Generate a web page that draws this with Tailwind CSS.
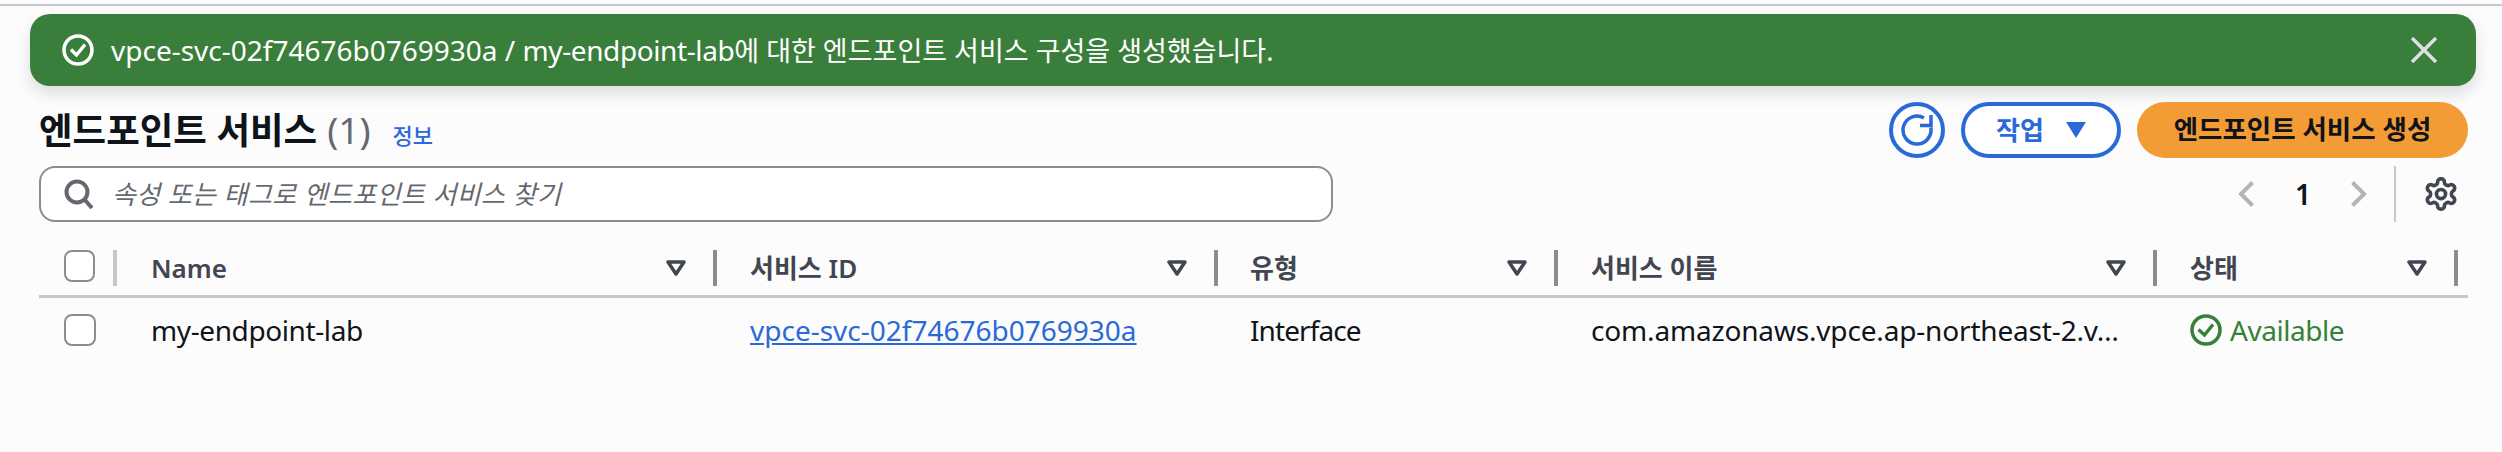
<!DOCTYPE html>
<html lang="ko">
<head>
  <meta charset="UTF-8" />
  <title>엔드포인트 서비스</title>
  <script src="https://cdn.jsdelivr.net/npm/@tailwindcss/browser@4"></script>
</head>
<body class="bg-[#fcfcfd] text-[#0f141a] font-['Noto_Sans','Noto_Sans_CJK_KR',sans-serif] text-[28px] overflow-hidden">
  <div class="w-[2502px] h-[452px] pt-[4px]">
    <div class="h-[2px] bg-[#c6c6cd]"></div>

    <!-- Success banner -->
    <div class="mt-[8px] ml-[30px] w-[2446px] h-[72px] rounded-[20px] bg-[#3a7e3b] text-white flex items-center pl-[32px] pr-[39px] shadow-[0_8px_16px_rgba(0,7,22,0.12)]">
      <svg class="w-[32px] h-[32px] shrink-0" viewBox="0 0 32 32" fill="none" stroke="white" stroke-width="3.5"><circle cx="16" cy="16" r="14"/><path d="M9 15.5l5.5 5.5 8.5-10.5"/></svg>
      <span class="ml-[17px]">vpce-svc-02f74676b0769930a / <span class="tracking-[-0.4px]">my-endpoint-lab</span><span class="text-[27px]">에 대한 엔드포인트 서비스 구성을 생성했습니다.</span></span>
      <svg class="ml-auto w-[26px] h-[26px] shrink-0" viewBox="0 0 26 26" fill="none" stroke="#dedee3" stroke-width="3.5"><path d="M1 1l24 24M25 1L1 25"/></svg>
    </div>

    <!-- Heading + actions -->
    <div class="ml-[39px] w-[2429px] flex justify-between mt-[16px] h-[56px]">
      <div class="flex items-baseline">
        <h1 class="text-[36.5px] font-bold leading-[56px]">엔드포인트 서비스</h1>
        <span class="text-[37px] text-[#656871] ml-[10px]">(1)</span>
        <a class="text-[22px] font-medium text-[#2a6ad8] ml-[22px]">정보</a>
      </div>
      <div class="flex gap-[16px]">
        <button class="w-[56px] h-[56px] rounded-full border-[4px] border-[#2a6ad8] bg-white flex items-center justify-center">
          <svg class="w-[34px] h-[34px]" viewBox="0 0 34 34" fill="none" stroke="#2a6ad8" stroke-width="3.5"><path d="M24 4.9A14 14 0 1 0 30.8 14.5"/><path d="M31 2v10.5H20"/></svg>
        </button>
        <button class="w-[160px] h-[56px] rounded-full border-[4px] border-[#2a6ad8] bg-white text-[#2a6ad8] font-bold text-[26px] flex items-center justify-center gap-[22px]">
          작업
          <svg class="w-[20px] h-[16px]" viewBox="0 0 20 16" fill="#2a6ad8"><path d="M0 0h20L10 16z"/></svg>
        </button>
        <button class="w-[331px] h-[56px] rounded-full bg-[#f39c36] font-bold text-[26.5px] flex items-center justify-center">엔드포인트 서비스 생성</button>
      </div>
    </div>

    <!-- Search + pagination -->
    <div class="ml-[39px] w-[2429px] flex mt-[8px] h-[56px]">
      <div class="w-[1294px] h-[56px] rounded-[16px] border-[2px] border-[#8c8c94] bg-white flex items-center pl-[23px]">
        <svg class="w-[30px] h-[30px] shrink-0" viewBox="0 0 30 30" fill="none" stroke="#656871" stroke-width="4"><circle cx="13" cy="13" r="10.5"/><path d="M20.5 20.5L28 29"/></svg>
        <span class="ml-[18px] italic text-[26px] tracking-[0.4px] text-[#656871]">속성 또는 태그로 엔드포인트 서비스 찾기</span>
      </div>
      <div class="ml-auto flex items-center">
        <svg class="w-[16px] h-[26px]" viewBox="0 0 16 26" fill="none" stroke="#b4b4bb" stroke-width="4"><path d="M14.5 1.5L3 13l11.5 11.5"/></svg>
        <span class="w-[55px] ml-[41px] font-semibold">1</span>
        <svg class="w-[16px] h-[26px] ml-[1px]" viewBox="0 0 16 26" fill="none" stroke="#b4b4bb" stroke-width="4"><path d="M1.5 1.5L13 13 1.5 24.5"/></svg>
        <div class="w-[2px] h-[56px] bg-[#c6c6cd] ml-[27px]"></div>
        <svg class="w-[34px] h-[34px] ml-[28px] mr-[10px]" viewBox="0.8 0.8 22.4 22.4" fill="none" stroke="#424650" stroke-width="2.4"><circle cx="12" cy="12" r="3"/><path d="M12.22 2h-.44a2 2 0 0 0-2 2v.18a2 2 0 0 1-1 1.73l-.43.25a2 2 0 0 1-2 0l-.15-.08a2 2 0 0 0-2.73.73l-.22.38a2 2 0 0 0 .73 2.73l.15.1a2 2 0 0 1 1 1.72v.51a2 2 0 0 1-1 1.74l-.15.09a2 2 0 0 0-.73 2.73l.22.38a2 2 0 0 0 2.73.73l.15-.08a2 2 0 0 1 2 0l.43.25a2 2 0 0 1 1 1.73V20a2 2 0 0 0 2 2h.44a2 2 0 0 0 2-2v-.18a2 2 0 0 1 1-1.73l.43-.25a2 2 0 0 1 2 0l.15.08a2 2 0 0 0 2.73-.73l.22-.39a2 2 0 0 0-.73-2.73l-.15-.08a2 2 0 0 1-1-1.74v-.5a2 2 0 0 1 1-1.74l.15-.09a2 2 0 0 0 .73-2.73l-.22-.38a2 2 0 0 0-2.73-.73l-.15.08a2 2 0 0 1-2 0l-.43-.25a2 2 0 0 1-1-1.73V4a2 2 0 0 0-2-2z"/></svg>
      </div>
    </div>

    <!-- Table header -->
    <div class="ml-[39px] w-[2429px] mt-[28px] h-[48px] border-b-[3px] border-[#c6c6cd] flex text-[#424650] font-semibold text-[26px]">
      <div class="w-[78px] h-[36px] flex items-start">
        <span class="ml-[25px] w-[32px] h-[32px] rounded-[8px] border-[2px] border-[#8c8c94] bg-white"></span>
        <span class="ml-[18px] w-[4px] h-[36px] bg-[#c6c6cd]"></span>
      </div>
      <div class="w-[600px] h-[36px] flex items-center pl-[34px] border-r-[4px] border-[#8c8c94]">
        <span class="leading-[36px]">Name</span>
        <svg class="ml-auto mr-[27px] w-[20px] h-[16px]" viewBox="0 0 20 16" fill="none" stroke="#424650" stroke-width="3.5" stroke-linejoin="round"><path d="M2 2h16l-8 12z"/></svg>
      </div>
      <div class="w-[501px] h-[36px] flex items-center pl-[33px] border-r-[4px] border-[#8c8c94]">
        <span class="leading-[36px]">서비스 ID</span>
        <svg class="ml-auto mr-[27px] w-[20px] h-[16px]" viewBox="0 0 20 16" fill="none" stroke="#424650" stroke-width="3.5" stroke-linejoin="round"><path d="M2 2h16l-8 12z"/></svg>
      </div>
      <div class="w-[340px] h-[36px] flex items-center pl-[32px] border-r-[4px] border-[#8c8c94]">
        <span class="leading-[36px]">유형</span>
        <svg class="ml-auto mr-[27px] w-[20px] h-[16px]" viewBox="0 0 20 16" fill="none" stroke="#424650" stroke-width="3.5" stroke-linejoin="round"><path d="M2 2h16l-8 12z"/></svg>
      </div>
      <div class="w-[599px] h-[36px] flex items-center pl-[33px] border-r-[4px] border-[#8c8c94]">
        <span class="leading-[36px]">서비스 이름</span>
        <svg class="ml-auto mr-[27px] w-[20px] h-[16px]" viewBox="0 0 20 16" fill="none" stroke="#424650" stroke-width="3.5" stroke-linejoin="round"><path d="M2 2h16l-8 12z"/></svg>
      </div>
      <div class="w-[301px] h-[36px] flex items-center pl-[33px] border-r-[4px] border-[#8c8c94]">
        <span class="leading-[36px]">상태</span>
        <svg class="ml-auto mr-[27px] w-[20px] h-[16px]" viewBox="0 0 20 16" fill="none" stroke="#424650" stroke-width="3.5" stroke-linejoin="round"><path d="M2 2h16l-8 12z"/></svg>
      </div>
    </div>

    <!-- Table row -->
    <div class="ml-[39px] w-[2429px] mt-[14px] h-[36px] flex items-center whitespace-nowrap">
      <div class="w-[78px]">
        <span class="block ml-[25px] w-[32px] h-[32px] rounded-[8px] border-[2px] border-[#8c8c94] bg-white"></span>
      </div>
      <div class="w-[600px] pl-[34px] tracking-[-0.4px]">my-endpoint-lab</div>
      <div class="w-[501px] pl-[33px]"><a class="text-[#2a6ad8] underline">vpce-svc-02f74676b0769930a</a></div>
      <div class="w-[340px] pl-[32px] tracking-[-0.9px]">Interface</div>
      <div class="w-[599px] pl-[33px] tracking-[-0.17px]">com.amazonaws.vpce.ap-northeast-2.v…</div>
      <div class="w-[301px] pl-[33px] flex items-center text-[#37803a]">
        <svg class="w-[32px] h-[32px] shrink-0" viewBox="0 0 32 32" fill="none" stroke="#37803a" stroke-width="3.5"><circle cx="16" cy="16" r="14"/><path d="M8.5 15.5l6 5.5 8.5-10.5"/></svg>
        <span class="ml-[8px] tracking-[-0.45px]">Available</span>
      </div>
    </div>
  </div>
</body>
</html>
